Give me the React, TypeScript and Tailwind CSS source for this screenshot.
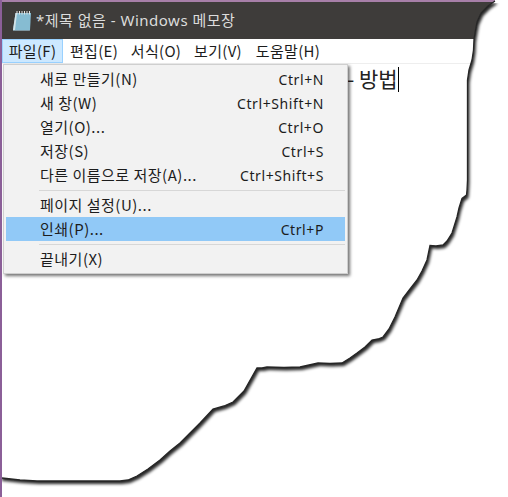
const edge =
  "M495 1 L488 6 L481 13 L477 22 L475.5 30 L474 39 L473.5 50 L472 60 L469 70 L467.5 80 L467.5 180 L467 190 L466.5 195 L462 198.5 L459 208 L457 217 L452 233 L447 241 L443 245 L436 246 L430 245.5 L427 260 L422 271 L417 280 L410 289 L403 298 L395 317 L389 329 L383 337 L378 339 L372 340 L365 347 L357 353 L350 358 L342 363 L330 363.5 L318 363 L300 367 L284 367.5 L267 367 L262 368 L257 368 L244 391 L233 402 L224 406 L213 409 L200 423 L190 433 L180 443 L170 451 L160 460 L148 469 L137 476 L128 480 L120 481 L80 481 L37 481 L20 480 L2 478";

const outside = edge + " L0 478 L0 497 L508 497 L508 0 L495 0 Z";
const inside = edge + " L0 478 L0 0 L495 0 Z";

const items = [
  { label: "새로 만들기(N)", keys: "Ctrl+N" },
  { label: "새 창(W)", keys: "Ctrl+Shift+N" },
  { label: "열기(O)...", keys: "Ctrl+O" },
  { label: "저장(S)", keys: "Ctrl+S" },
  { label: "다른 이름으로 저장(A)...", keys: "Ctrl+Shift+S" },
  { sep: true },
  { label: "페이지 설정(U)..." },
  { label: "인쇄(P)...", keys: "Ctrl+P", active: true },
  { sep: true },
  { label: "끝내기(X)" },
];

const NotepadIcon = () => (
  <svg width="20" height="22" viewBox="0 0 20 22" className="shrink-0">
    <path d="M3.5 3 L19 3 L18 20 L1 20 Z" fill="#86bcd2" />
    <path d="M3.5 3 L5 3 L3 20 L1 20 Z" fill="#d3e3e8" />
    <path d="M1 20 L18 20 L17.8 21 L1 21 Z" fill="#7d95a0" />
    <path d="M5 1 V4.5 M7.5 1 V4.5 M10 1 V4.5 M12.5 1 V4.5 M15 1 V4.5 M17.5 1 V4.5" stroke="#e4e4e4" strokeWidth="1" />
  </svg>
);

export default function App() {
  return (
    <div className="relative w-[508px] h-[497px] bg-white overflow-hidden font-['Noto_Sans_CJK_KR','Noto_Sans',sans-serif] border-l-2 border-[#8b5f98]">
      <div className="h-[39px] bg-[#3e3c3a] border-t-2 border-[#a77fa8] flex items-center pl-[10px] gap-[4px]">
        <NotepadIcon />
        <span className="text-[15px] leading-none text-[#dcdcdc] tracking-[0.5px] font-['Noto_Sans','Noto_Sans_CJK_KR',sans-serif]">
          *제목 없음 - Windows 메모장
        </span>
      </div>

      <div className="h-[25px] bg-white border-b border-[#eeeeee] flex text-[15px] tracking-[0.3px] text-[#1c1c1c]">
        <div className="w-[61px] h-[24px] bg-[#cce8ff] border border-[#99d1ff] flex items-center justify-center">파일(F)</div>
        <div className="w-[62px] flex items-center justify-center">편집(E)</div>
        <div className="w-[62px] flex items-center justify-center">서식(O)</div>
        <div className="w-[62px] flex items-center justify-center">보기(V)</div>
        <div className="w-[78px] flex items-center justify-center">도움말(H)</div>
      </div>

      <div className="pl-[345px] flex items-center h-[30px] text-[21px] text-[#222222]">
        <span>- 방법</span>
        <span className="w-px h-[25px] bg-black" />
      </div>

      <div className="absolute left-[1px] top-[64px] w-[345px] bg-[#f2f2f2] border border-[#cfcfcf] p-[2px] shadow-[2px_2px_3px_rgba(0,0,0,0.55)] text-[15px] text-[#1c1c1c]">
        {items.map((item, i) =>
          item.sep ? (
            <div key={i} className="h-[6px] pl-[33px] flex items-center">
              <div className="h-px w-full bg-[#d7d7d7]" />
            </div>
          ) : (
            <div
              key={i}
              className={`h-[24px] pl-[34px] pr-[21px] flex items-center justify-between ${item.active ? "bg-[#91c9f7]" : ""}`}
            >
              <span className="tracking-[0.5px]">{item.label}</span>
              <span className="font-['Noto_Sans',sans-serif] text-[14px] tracking-[0.6px]">{item.keys}</span>
            </div>
          )
        )}
      </div>

      <svg width="508" height="497" viewBox="0 0 508 497" className="absolute left-[-2px] top-0 pointer-events-none">
        <defs>
          <filter id="blur" filterUnits="userSpaceOnUse" x="0" y="0" width="508" height="497">
            <feGaussianBlur stdDeviation="1.5" />
          </filter>
          <clipPath id="out">
            <path d={outside} />
          </clipPath>
        </defs>
        <path d={outside} fill="#ffffff" />
        <g clipPath="url(#out)">
          <g transform="translate(2 3)">
            <path d={inside} fill="#000000" fillOpacity="0.85" filter="url(#blur)" />
          </g>
        </g>
        <path d={edge} fill="none" stroke="#262626" strokeWidth="1.3" />
      </svg>
    </div>
  );
}
